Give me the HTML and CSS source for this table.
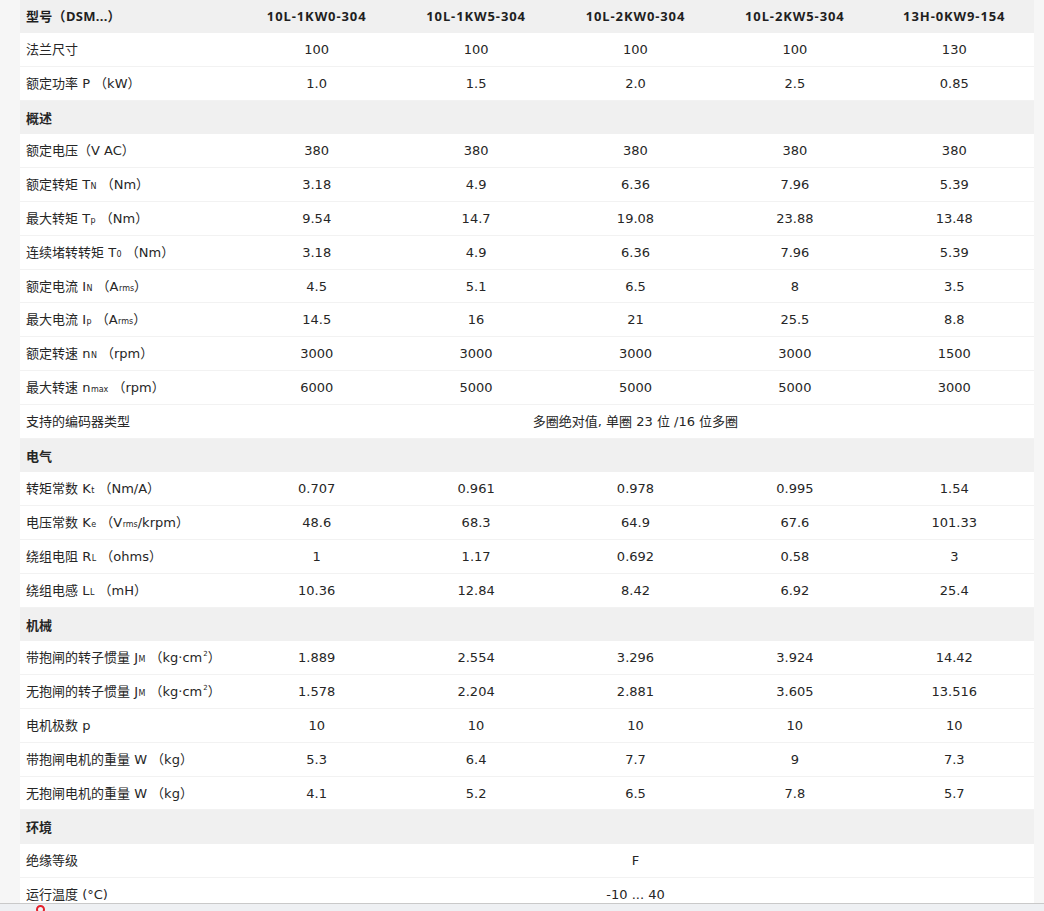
FILE: index.html
```html
<!DOCTYPE html>
<html lang="zh-CN">
<head>
<meta charset="utf-8">
<title>DSM</title>
<link rel="stylesheet" href="styles.css">
</head>
<body>
<div class="page">
<table class="spec">
<colgroup><col class="c0"><col class="cv"><col class="cv"><col class="cv"><col class="cv"><col class="cv"></colgroup>
<thead>
<tr class="head"><th class="lab">型号（DSM...）</th><th>10L-1KW0-304</th><th>10L-1KW5-304</th><th>10L-2KW0-304</th><th>10L-2KW5-304</th><th>13H-0KW9-154</th></tr>
</thead>
<tbody>
<tr><td class="lab">法兰尺寸</td><td>100</td><td>100</td><td>100</td><td>100</td><td>130</td></tr>
<tr><td class="lab">额定功率 P （kW）</td><td>1.0</td><td>1.5</td><td>2.0</td><td>2.5</td><td>0.85</td></tr>
<tr class="sec"><td class="lab" colspan="6">概述</td></tr>
<tr><td class="lab">额定电压（V AC）</td><td>380</td><td>380</td><td>380</td><td>380</td><td>380</td></tr>
<tr><td class="lab">额定转矩 T<span class="sb">N</span> （Nm）</td><td>3.18</td><td>4.9</td><td>6.36</td><td>7.96</td><td>5.39</td></tr>
<tr><td class="lab">最大转矩 T<span class="sb">p</span> （Nm）</td><td>9.54</td><td>14.7</td><td>19.08</td><td>23.88</td><td>13.48</td></tr>
<tr><td class="lab">连续堵转转矩 T<span class="sb">0</span> （Nm）</td><td>3.18</td><td>4.9</td><td>6.36</td><td>7.96</td><td>5.39</td></tr>
<tr><td class="lab">额定电流 I<span class="sb">N</span> （A<span class="sb">rms</span>）</td><td>4.5</td><td>5.1</td><td>6.5</td><td>8</td><td>3.5</td></tr>
<tr><td class="lab">最大电流 I<span class="sb">p</span> （A<span class="sb">rms</span>）</td><td>14.5</td><td>16</td><td>21</td><td>25.5</td><td>8.8</td></tr>
<tr><td class="lab">额定转速 n<span class="sb">N</span> （rpm）</td><td>3000</td><td>3000</td><td>3000</td><td>3000</td><td>1500</td></tr>
<tr><td class="lab">最大转速 n<span class="sb">max</span> （rpm）</td><td>6000</td><td>5000</td><td>5000</td><td>5000</td><td>3000</td></tr>
<tr><td class="lab">支持的编码器类型</td><td colspan="5">多圈绝对值, 单圈 23 位 /16 位多圈</td></tr>
<tr class="sec"><td class="lab" colspan="6">电气</td></tr>
<tr><td class="lab">转矩常数 K<span class="sb">t</span> （Nm/A）</td><td>0.707</td><td>0.961</td><td>0.978</td><td>0.995</td><td>1.54</td></tr>
<tr><td class="lab">电压常数 K<span class="sb">e</span> （V<span class="sb">rms</span>/krpm）</td><td>48.6</td><td>68.3</td><td>64.9</td><td>67.6</td><td>101.33</td></tr>
<tr><td class="lab">绕组电阻 R<span class="sb">L</span> （ohms）</td><td>1</td><td>1.17</td><td>0.692</td><td>0.58</td><td>3</td></tr>
<tr><td class="lab">绕组电感 L<span class="sb">L</span> （mH）</td><td>10.36</td><td>12.84</td><td>8.42</td><td>6.92</td><td>25.4</td></tr>
<tr class="sec"><td class="lab" colspan="6">机械</td></tr>
<tr><td class="lab">带抱闸的转子惯量 J<span class="sb">M</span> （kg·cm<span class="sp">2</span>）</td><td>1.889</td><td>2.554</td><td>3.296</td><td>3.924</td><td>14.42</td></tr>
<tr><td class="lab">无抱闸的转子惯量 J<span class="sb">M</span> （kg·cm<span class="sp">2</span>）</td><td>1.578</td><td>2.204</td><td>2.881</td><td>3.605</td><td>13.516</td></tr>
<tr><td class="lab">电机极数 p</td><td>10</td><td>10</td><td>10</td><td>10</td><td>10</td></tr>
<tr><td class="lab">带抱闸电机的重量 W （kg）</td><td>5.3</td><td>6.4</td><td>7.7</td><td>9</td><td>7.3</td></tr>
<tr><td class="lab">无抱闸电机的重量 W （kg）</td><td>4.1</td><td>5.2</td><td>6.5</td><td>7.8</td><td>5.7</td></tr>
<tr class="sec"><td class="lab" colspan="6">环境</td></tr>
<tr><td class="lab">绝缘等级</td><td colspan="5">F</td></tr>
<tr><td class="lab">运行温度 (°C)</td><td colspan="5">-10 ... 40</td></tr>
</tbody>
</table>
</div>
<div class="footbar"><span class="dot"></span></div>
</body>
</html>
```

FILE: styles.css
```css
html, body {
  margin: 0;
  padding: 0;
  background: #f6f6f6;
  overflow: hidden;
}
body {
  font-family: "DejaVu Sans", "Noto Sans CJK SC", sans-serif;
  font-size: 13px;
  color: #262626;
  height: 911px;
}
.page {
  padding: 0 10px 0 20px;
}
.spec {
  width: 1014px;
  border-collapse: collapse;
  table-layout: fixed;
  background: #ffffff;
}
.c0 { width: 217px; }
.cv { width: 159.4px; }
.spec th,
.spec td {
  padding: 6px 6px;
  line-height: 20.8px;
  text-align: center;
  font-weight: 400;
  border-bottom: 1px solid #f2f2f2;
  white-space: nowrap;
}
.spec td {
  padding-top: 7px;
  padding-bottom: 5px;
}
.spec th {
  font-family: "Noto Sans", "Noto Sans CJK SC", sans-serif;
  font-weight: 700;
  letter-spacing: 0.9px;
  background: #f0f0f0;
  color: #1f1f1f;
  border-bottom: none;
  line-height: 21px;
}
.spec th.lab {
  letter-spacing: 0.3px;
}
.spec .lab {
  text-align: left;
  padding-left: 6px;
}
.sec td {
  font-family: "Noto Sans", "Noto Sans CJK SC", sans-serif;
  background: #f0f0f0;
  font-weight: 700;
  border-bottom: 1px solid #f0f0f0;
}
.sb {
  font-size: 8px;
  line-height: 1;
  margin-left: 0.5px;
}
.sp {
  font-size: 7px;
  line-height: 1;
  vertical-align: 6px;
  margin-left: 1px;
}
.footbar {
  position: fixed;
  left: 0;
  right: 0;
  bottom: 0;
  height: 7px;
  background: #eef0f3;
  border-top: 1px solid #c9c9c9;
  overflow: hidden;
}
.dot {
  position: absolute;
  left: 36px;
  top: 1px;
  width: 9px;
  height: 9px;
  border-radius: 50%;
  border: 2px solid #e4212b;
  box-sizing: border-box;
}
```
